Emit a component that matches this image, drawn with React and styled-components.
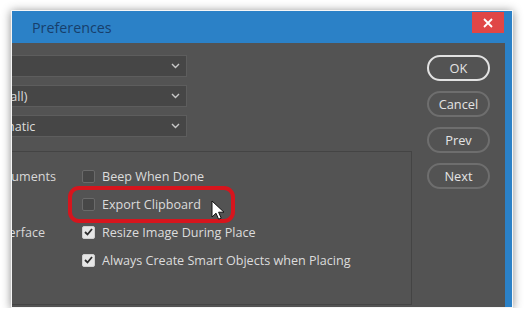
import React from 'react'
import styled, { createGlobalStyle } from 'styled-components'

const GlobalStyle = createGlobalStyle`
body {
  margin: 0;
  background: #ffffff;
  font-family: "Open Sans", "Noto Sans", sans-serif;
}
`

const Window = styled.div`
margin: 10px 0 0 11px;
width: 502px;
height: 298px;
box-sizing: border-box;
border: 1px solid #f6f6f6;
background: #2b81c7;
display: flex;
flex-direction: column;
overflow: hidden;
box-shadow: 0 1px 9px rgba(0, 0, 0, 0.45);
`

const TitleBar = styled.div`
height: 32px;
flex: none;
display: flex;
align-items: flex-start;
padding: 0 8px 0 20px;
`

const Title = styled.div`
align-self: center;
font-size: 14.3px;
color: #173f6c;
`

const Close = styled.div`
margin-left: auto;
margin-top: 1px;
width: 32px;
height: 21px;
background: #e04646;
display: flex;
align-items: center;
justify-content: center;
`

const Body = styled.div`
flex: 1;
display: flex;
background: #535353;
margin-right: 7px;
`

const Panel = styled.div`
width: 400px;
flex: none;
overflow: hidden;
display: flex;
flex-direction: column;
padding-top: 12px;
box-sizing: border-box;
`

const Select = styled.div`
height: 22px;
margin-left: -89px;
width: 264px;
box-sizing: border-box;
margin-bottom: 8px;
background: #464646;
border: 1px solid #5d5d5d;
display: flex;
align-items: center;
padding: 0 6px;
font-size: 12.6px;
color: #dcdcdc;
white-space: nowrap;
svg { margin-left: auto; }
`

const Group = styled.div`
margin: 6px 0 2px -30px;
flex: 1;
border: 1px solid #444444;
display: grid;
grid-template-columns: 99px 1fr;
grid-auto-rows: 28px;
align-content: start;
padding-top: 10px;
`

const SideLabel = styled.div`
display: flex;
align-items: center;
justify-content: flex-end;
padding-right: ${p => p.$trim}px;
font-size: 12.6px;
color: #d8d8d8;
white-space: nowrap;
`

const Option = styled.label`
position: relative;
display: flex;
align-items: center;
gap: 7px;
font-size: 12.6px;
color: #dcdcdc;
white-space: nowrap;
`

const Box = styled.span`
width: 13px;
height: 13px;
box-sizing: border-box;
border-radius: 2px;
border: 1px solid ${p => (p.$on ? '#cfcfcf' : '#6a6a6a')};
background: ${p => (p.$on ? '#e6e6e6' : '#474747')};
display: flex;
align-items: center;
justify-content: center;
`

const Highlight = styled.div`
position: absolute;
left: -14px;
top: -4px;
width: 167px;
height: 37px;
box-sizing: border-box;
border: 4px solid #d6151d;
border-radius: 11px;
`

const Cursor = styled.svg`
position: absolute;
left: 129px;
top: 10px;
`

const Buttons = styled.div`
flex: 1;
display: flex;
flex-direction: column;
align-items: center;
padding-top: 12px;
gap: 10px;
`

const Button = styled.div`
width: 63px;
height: 26px;
box-sizing: border-box;
border-radius: 13px;
border: ${p => (p.$main ? '2px solid #e2e2e2' : '2px solid #6e6e6e')};
display: flex;
align-items: center;
justify-content: center;
font-size: 12.8px;
color: #e4e4e4;
`

const Chevron = () => (
  <svg width="9" height="6" viewBox="0 0 9 6">
    <path d="M1 1l3.5 3.5L8 1" fill="none" stroke="#c8c8c8" strokeWidth="1.4" />
  </svg>
)

const Check = () => (
  <svg width="9" height="8" viewBox="0 0 9 8">
    <path d="M1 4l2.5 2.5L8 1" fill="none" stroke="#2e2e2e" strokeWidth="1.8" />
  </svg>
)

const App = () => {
  return (
    <>
      <GlobalStyle />
      <Window>
        <TitleBar>
          <Title>Preferences</Title>
          <Close>
            <svg width="10" height="10" viewBox="0 0 10 10">
              <path d="M1 1l8 8M9 1l-8 8" stroke="#fff" strokeWidth="1.8" />
            </svg>
          </Close>
        </TitleBar>
        <Body>
          <Panel>
            <Select>Adobe<Chevron /></Select>
            <Select>Hue Strip (Small)<Chevron /></Select>
            <Select>Bicubic Automatic<Chevron /></Select>
            <Group>
              <SideLabel $trim={26}>Auto-Update Open Documents</SideLabel>
              <Option><Box />Beep When Done</Option>
              <SideLabel $trim={26} />
              <Option>
                <Box />Export Clipboard
                <Highlight />
                <Cursor width="14" height="21" viewBox="0 0 14 21">
                  <path d="M1 1v16l4-3.8 2.6 6 2.6-1.1-2.6-5.9h5.4z" fill="#fff" stroke="#111" strokeWidth="1" />
                </Cursor>
              </Option>
              <SideLabel $trim={37}>Use Legacy Interface</SideLabel>
              <Option><Box $on><Check /></Box>Resize Image During Place</Option>
              <SideLabel $trim={26} />
              <Option><Box $on><Check /></Box>Always Create Smart Objects when Placing</Option>
            </Group>
          </Panel>
          <Buttons>
            <Button $main>OK</Button>
            <Button>Cancel</Button>
            <Button>Prev</Button>
            <Button>Next</Button>
          </Buttons>
        </Body>
      </Window>
    </>
  )
}

export default App
